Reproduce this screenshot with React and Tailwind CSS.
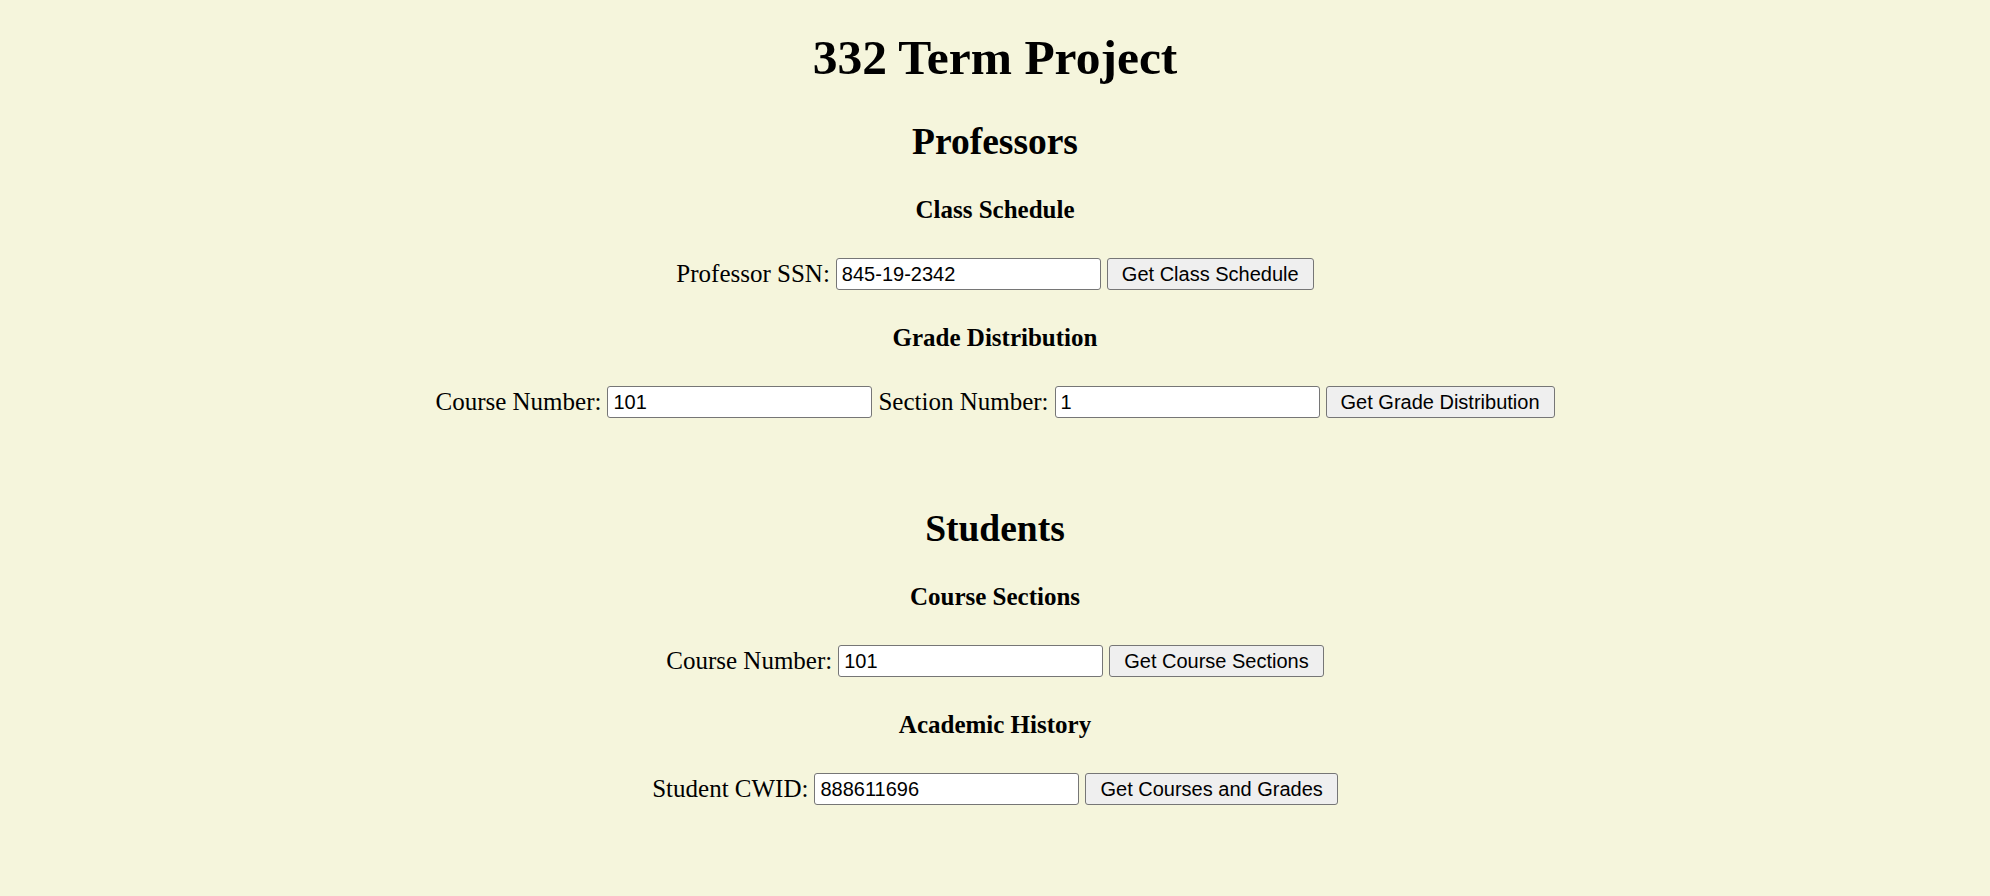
import React from 'react';

const serif = "font-['Liberation_Serif','Times_New_Roman',serif]";
const sans = "font-['Liberation_Sans',Arial,sans-serif]";

function Field({ label, value }) {
  return (
    <>
      <label className="text-[25px] leading-[28px] text-black">{label}</label>
      <input
        type="text"
        defaultValue={value}
        className={`${sans} w-[265px] h-[32px] px-[5px] text-[20px] text-black bg-white border border-[#767676] rounded-[3px] outline-none`}
      />
    </>
  );
}

function Row({ fields, button }) {
  return (
    <div className="flex items-center justify-center gap-[6px] mt-[34px]">
      {fields.map((f) => (
        <Field key={f.label} label={f.label} value={f.value} />
      ))}
      <button
        type="button"
        className={`${sans} h-[32px] px-[14px] text-[20px] text-black bg-[#efefef] border border-[#767676] rounded-[3px]`}
      >
        {button}
      </button>
    </div>
  );
}

function SubHeading({ children }) {
  return <h4 className="mt-[34px] text-[25px] leading-[28px] font-bold text-black">{children}</h4>;
}

export default function App() {
  return (
    <div className={`${serif} min-h-[896px] bg-[#f5f5dc] flex flex-col items-center pt-[30px] text-black`}>
      <h1 className="text-[49.5px] leading-[55px] font-bold">332 Term Project</h1>

      <h2 className="mt-[36px] text-[37.5px] leading-[41px] font-bold">Professors</h2>
      <SubHeading>Class Schedule</SubHeading>
      <Row fields={[{ label: 'Professor SSN:', value: '845-19-2342' }]} button="Get Class Schedule" />
      <SubHeading>Grade Distribution</SubHeading>
      <Row
        fields={[
          { label: 'Course Number:', value: '101' },
          { label: 'Section Number:', value: '1' },
        ]}
        button="Get Grade Distribution"
      />

      <h2 className="mt-[90px] text-[37.5px] leading-[41px] font-bold">Students</h2>
      <SubHeading>Course Sections</SubHeading>
      <Row fields={[{ label: 'Course Number:', value: '101' }]} button="Get Course Sections" />
      <SubHeading>Academic History</SubHeading>
      <Row fields={[{ label: 'Student CWID:', value: '888611696' }]} button="Get Courses and Grades" />
    </div>
  );
}
